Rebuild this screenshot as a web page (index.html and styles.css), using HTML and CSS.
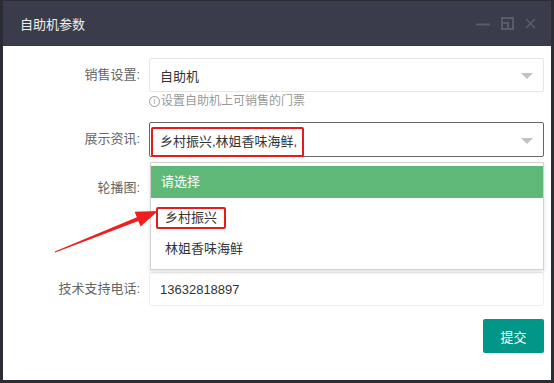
FILE: index.html
```html
<!DOCTYPE html>
<html lang="zh-CN">
<head>
    <meta charset="UTF-8">
    <meta name="viewport" content="width=device-width, initial-scale=1.0">
    <title>自助机参数</title>
    <link rel="stylesheet" href="styles.css">
</head>
<body>
    <div class="layer">
        <div class="layer-title">
            <span>自助机参数</span>
            <div class="layer-tools">
                <svg width="14" height="14" viewBox="0 0 14 14"><path d="M0 7.5h14" stroke="#585b6a" stroke-width="2"/></svg>
                <svg width="13" height="13" viewBox="0 0 13 13" fill="none" stroke="#585b6a" stroke-width="2"><rect x="1" y="1" width="11" height="11"/><path d="M1 6h6V12"/></svg>
                <svg width="11" height="11" viewBox="0 0 11 11"><path d="M1 1l9 9M10 1l-9 9" stroke="#585b6a" stroke-width="1.6"/></svg>
            </div>
        </div>

        <div class="layer-content">
            <div class="form-row">
                <label class="form-label">销售设置:</label>
                <div class="form-field">
                    <div class="select">
                        <span>自助机</span>
                        <i class="caret"></i>
                    </div>
                    <div class="hint"><i class="hint-icon">i</i>设置自助机上可销售的门票</div>
                </div>
            </div>

            <div class="form-row row-news">
                <label class="form-label">展示资讯:</label>
                <div class="form-field">
                    <div class="select select-open">
                        <span class="mark mark-value">乡村振兴,林姐香味海鲜,</span>
                        <i class="caret"></i>
                    </div>
                    <div class="dropdown">
                        <div class="dd-item dd-head">请选择</div>
                        <div class="dd-item dd-first"><span class="mark mark-option">乡村振兴</span></div>
                        <div class="dd-item">林姐香味海鲜</div>
                    </div>
                </div>
            </div>

            <div class="form-row row-banner">
                <label class="form-label">轮播图:</label>
                <div class="form-field"></div>
            </div>

            <div class="form-row">
                <label class="form-label">技术支持电话:</label>
                <div class="form-field">
                    <div class="input">13632818897</div>
                </div>
            </div>

            <div class="form-actions">
                <button class="btn">提交</button>
            </div>
        </div>

        <svg class="annot-arrow" width="554" height="383" viewBox="0 0 554 383">
            <polygon points="54.8,251.5 136.9,217.2 134.6,211.7 158,211 140.6,226.5 138.3,220.9 55.2,252.5" fill="#f01e1e"/>
        </svg>
    </div>
</body>
</html>
```

FILE: styles.css
```css
* {
    box-sizing: border-box;
}
body {
    margin: 0;
    background: #2c2d34;
    font-family: "Liberation Sans", "Noto Sans CJK SC", sans-serif;
    font-size: 13px;
    color: #333;
}
.layer {
    margin: 1px 3px 0;
    height: 379px;
    background: #fff;
}
.layer-title {
    height: 45px;
    background: #3a3c4b;
    color: #eee;
    display: flex;
    align-items: center;
    justify-content: space-between;
    padding: 0 15px 0 17px;
}
.layer-tools {
    display: flex;
    align-items: center;
    gap: 11px;
}
.layer-content {
    padding-top: 12px;
}
.form-row {
    display: flex;
    align-items: flex-start;
}
.form-label {
    width: 146px;
    padding-right: 9px;
    text-align: right;
    line-height: 34px;
    color: #666;
}
.form-field {
    width: 395px;
    position: relative;
}
.select, .input {
    height: 34px;
    border: 1px solid #e6e6e6;
    border-radius: 2px;
    padding: 0 10px;
    display: flex;
    align-items: center;
    justify-content: space-between;
}
.caret {
    width: 0;
    height: 0;
    border-left: 6px solid transparent;
    border-right: 6px solid transparent;
    border-top: 6px solid #c2c2c2;
    margin-top: 2px;
}
.hint {
    line-height: 18px;
    font-size: 12px;
    color: #999;
    display: flex;
    align-items: center;
}
.hint-icon {
    width: 11px;
    height: 11px;
    border: 1px solid #999;
    border-radius: 50%;
    font-size: 8px;
    line-height: 9px;
    font-style: normal;
    text-align: center;
    margin-right: 1px;
}
.row-news {
    margin-top: 12px;
}
.select-open {
    height: 35px;
    border-color: #666;
    padding-left: 1px;
    align-items: flex-end;
}
.select-open .caret {
    align-self: center;
}
.mark {
    display: inline-block;
    border: 2px solid #e51c1c;
    border-radius: 2px;
}
.mark-value {
    height: 30px;
    line-height: 26px;
    padding: 0 5px 0 7px;
    margin-bottom: -1px;
}
.mark-option {
    height: 22px;
    line-height: 18px;
    padding: 0 7px;
}
.dropdown {
    position: absolute;
    top: calc(100% + 5px);
    left: 1px;
    right: 0;
    z-index: 2;
    background: #fff;
    border: 1px solid #d2d2d2;
    box-shadow: 0 2px 4px rgba(0, 0, 0, 0.12);
    padding: 3px 0 5px;
}
.dd-item {
    height: 31px;
    line-height: 31px;
    padding-left: 14px;
}
.dd-head {
    height: 32px;
    line-height: 32px;
    padding-left: 10px;
    background: #5fb878;
    color: #fff;
}
.dd-first {
    margin-top: 4px;
    padding-left: 5px;
    display: flex;
    align-items: center;
}
.row-banner {
    margin-top: 14px;
    height: 101px;
}
.input {
    border-color: #eee;
}
.form-actions {
    display: flex;
    justify-content: flex-end;
    padding-right: 7px;
    margin-top: 13px;
}
.btn {
    width: 61px;
    height: 34px;
    border: none;
    border-radius: 2px;
    background: #009688;
    color: #fff;
    font-family: inherit;
    font-size: 13px;
}
.annot-arrow {
    position: absolute;
    left: 0;
    top: 0;
    z-index: 3;
    pointer-events: none;
}
```
